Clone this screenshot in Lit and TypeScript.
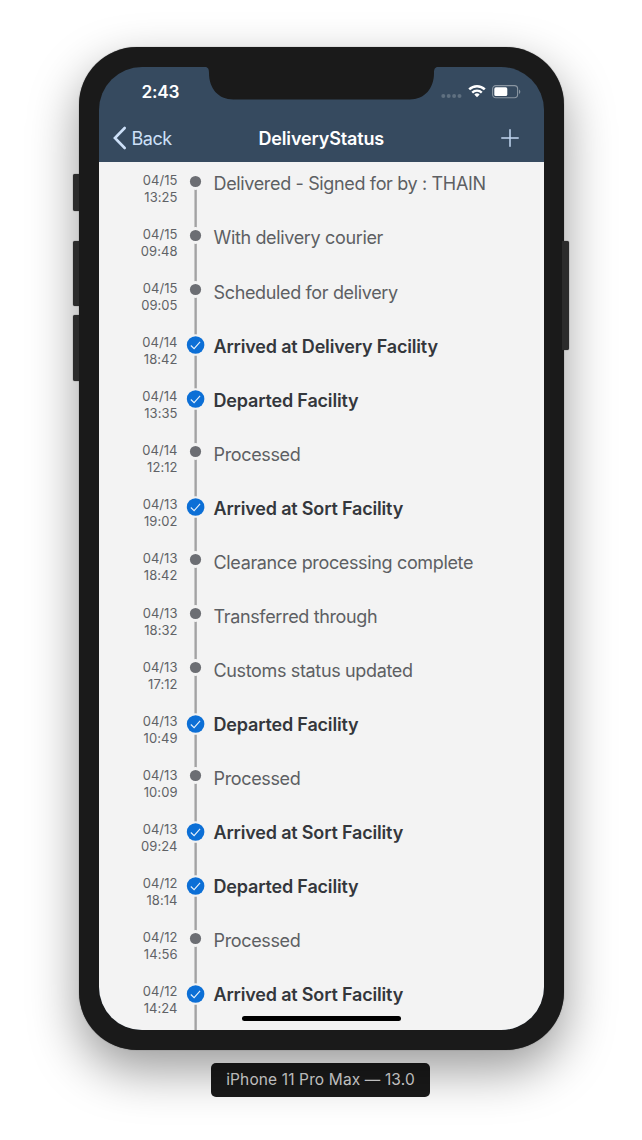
import { LitElement, html, css } from "lit";
import { customElement } from "lit/decorators.js";
import { classMap } from "lit/directives/class-map.js";

interface TrackingEvent {
  date: string;
  time: string;
  label: string;
  major?: boolean;
}

const EVENTS: TrackingEvent[] = [
  { date: "04/15", time: "13:25", label: "Delivered - Signed for by : THAIN" },
  { date: "04/15", time: "09:48", label: "With delivery courier" },
  { date: "04/15", time: "09:05", label: "Scheduled for delivery" },
  { date: "04/14", time: "18:42", label: "Arrived at Delivery Facility", major: true },
  { date: "04/14", time: "13:35", label: "Departed Facility", major: true },
  { date: "04/14", time: "12:12", label: "Processed" },
  { date: "04/13", time: "19:02", label: "Arrived at Sort Facility", major: true },
  { date: "04/13", time: "18:42", label: "Clearance processing complete" },
  { date: "04/13", time: "18:32", label: "Transferred through" },
  { date: "04/13", time: "17:12", label: "Customs status updated" },
  { date: "04/13", time: "10:49", label: "Departed Facility", major: true },
  { date: "04/13", time: "10:09", label: "Processed" },
  { date: "04/13", time: "09:24", label: "Arrived at Sort Facility", major: true },
  { date: "04/12", time: "18:14", label: "Departed Facility", major: true },
  { date: "04/12", time: "14:56", label: "Processed" },
  { date: "04/12", time: "14:24", label: "Arrived at Sort Facility", major: true },
];

@customElement("delivery-timeline")
class DeliveryTimeline extends LitElement {
  static styles = css`
    :host { display: block; position: relative; flex: 1; min-height: 0; overflow: hidden; background: #f3f3f3; }
    .line {
      position: absolute; left: 95.5px; top: 19px; bottom: 0; width: 3px;
      background: linear-gradient(90deg, #c6c6c6 1px, #a2a2a3 1px, #a2a2a3 2px, #b0b0b1 2px);
    }
    .row { position: relative; display: grid; grid-template-columns: 79px 36px 1fr; height: 54.07px; }
    .when { padding-top: 10px; text-align: right; font-size: 13px; line-height: 17px; letter-spacing: 0.05px; color: #606266; }
    .marker { display: flex; justify-content: center; align-items: flex-start; padding-top: 10.8px; }
    .marker.major { padding-top: 10px; }
    .marker svg { display: block; }
    .label { padding-top: 10.4px; font-size: 18px; line-height: 24px; letter-spacing: -0.35px; color: #5d5f63; white-space: nowrap; }
    .label.major { font-weight: 600; color: #34373c; letter-spacing: -0.18px; }
  `;

  render() {
    return html`
      <div class="line"></div>
      ${EVENTS.map((e) => {
        const major = !!e.major;
        return html`<div class="row">
          <div class="when">${e.date}<br />${e.time}</div>
          <div class=${classMap({ marker: true, major })}>
            ${major
              ? html`<svg width="23" height="22" viewBox="0 0 23 22">
                  <circle cx="11.6" cy="11" r="10.8" fill="#f3f3f3" />
                  <circle cx="11.6" cy="11" r="8.8" fill="#0c6fd6" />
                  <path d="M6.8 11.5 10.1 14.700 16.1 7.800" fill="none" stroke="#e8f2fc" stroke-width="1.1" />
                </svg>`
              : html`<svg width="17" height="17" viewBox="0 0 17 17">
                  <circle cx="8.5" cy="8.5" r="8.5" fill="#f3f3f3" />
                  <circle cx="8.5" cy="8.5" r="5.6" fill="#6c6e73" />
                </svg>`}
          </div>
          <div class=${classMap({ label: true, major })}>${e.label}</div>
        </div>`;
      })}
    `;
  }
}

@customElement("app-root")
class AppRoot extends LitElement {
  static styles = css`
    :host {
      display: flex; flex-direction: column; align-items: center; box-sizing: border-box;
      width: 642px; height: 1140px; padding-top: 46.5px; overflow: hidden; background: #fff;
      font-family: Inter, "Liberation Sans", sans-serif;
    }
    .phone {
      position: relative; box-sizing: border-box; width: 485px; height: 1003.5px; padding: 20.5px 20px 20.5px;
      background: #1a1a1a; border-radius: 58px;
      box-shadow: 0 0 1px rgba(0, 0, 0, 0.6), 0 20px 50px rgba(0, 0, 0, 0.4);
    }
    .key { position: absolute; width: 6px; background: #2b2b2b; border-radius: 2px 0 0 2px; left: -6px; box-shadow: 0 0 1px #222; }
    .mute { top: 127px; height: 37px; }
    .up { top: 194.5px; height: 65px; }
    .down { top: 268.5px; height: 65.5px; }
    .power { left: auto; right: -5.4px; top: 194.5px; height: 108.5px; border-radius: 0 2px 2px 0; width: 7px; }
    .screen { position: relative; display: flex; flex-direction: column; height: 100%; overflow: hidden; border-radius: 43px; background: #364a5f; }
    .notch { position: absolute; left: 106px; top: 0; display: block; }
    .status { display: flex; align-items: flex-start; height: 48px; padding: 0 23px 0 43px; color: #fff; }
    .clock { flex: 1; padding-top: 13.5px; font-size: 17.3px; line-height: 22px; font-weight: 600; letter-spacing: -0.25px; }
    .status svg { display: block; }
    .cell { margin: 26.5px 6px 0 0; }
    .wifi { margin: 16.5px 6px 0 0; }
    .battery { margin-top: 17.5px; }
    .nav { display: grid; grid-template-columns: 1fr auto 1fr; align-items: center; height: 47px; padding: 0 24.5px 0 14px; }
    .back { display: flex; align-items: center; gap: 5px; font-size: 18px; color: #cde0f8; letter-spacing: -0.5px; }
    .title { font-size: 18px; font-weight: 600; color: #fff; letter-spacing: -0.15px; padding-left: 11px; }
    .back svg, .back span, .title { margin-top: -1px; }
    .add { justify-self: end; display: block; margin-top: -1px; }
    .home { position: absolute; left: 143px; bottom: 8.5px; width: 159px; height: 5.5px; border-radius: 3px; background: #000; }
    .caption {
      margin: 13px 1px 0 0; width: 219px; height: 34px; border-radius: 5px; background: #1a1a1a;
      color: #dcdcdc; font-size: 15.5px; letter-spacing: 0.13px; line-height: 34px; text-align: center; white-space: nowrap;
    }
  `;

  render() {
    return html`
      <div class="phone">
        <div class="key mute"></div>
        <div class="key up"></div>
        <div class="key down"></div>
        <div class="key power"></div>
        <div class="screen">
          <div class="status">
            <span class="clock">2:43</span>
            <svg class="cell" width="21" height="5" viewBox="0 0 21 5" fill="#5f7080">
              <circle cx="2.3" cy="2" r="2" /><circle cx="7.7" cy="2" r="2" />
              <circle cx="13.1" cy="2" r="2" /><circle cx="18.5" cy="2" r="2" />
            </svg>
            <svg class="wifi" width="18" height="14" viewBox="0 0 18 14" fill="none" stroke="#fff">
              <path d="M1.2 5.4a11.2 11.2 0 0 1 15.6 0" stroke-width="2.5" />
              <path d="M4.2 8.6a6.9 6.9 0 0 1 9.6 0" stroke-width="2.4" />
              <path d="M9 13.3 6.3 10.6a4 4 0 0 1 5.4 0Z" fill="#fff" stroke="none" />
            </svg>
            <svg class="battery" width="29" height="14" viewBox="0 0 29 14">
              <rect x="0.6" y="0.6" width="25" height="12.2" rx="3.2" fill="none" stroke="#8995a1" stroke-width="1.1" />
              <path d="M27 4.5v4.5c1.8-.8 1.8-3.7 0-4.5Z" fill="#8995a1" />
              <rect x="2.3" y="2.3" width="13" height="8.8" rx="1.6" fill="#fff" />
            </svg>
          </div>
          <div class="nav">
            <div class="back">
              <svg width="14" height="24" viewBox="0 0 14 24" fill="none" stroke="#cde0f8" stroke-width="2.6" stroke-linecap="round">
                <path d="M11.7 2 1.9 12 11.7 22" />
              </svg>
              <span>Back</span>
            </div>
            <div class="title">DeliveryStatus</div>
            <svg class="add" width="18" height="18" viewBox="0 0 18 18" stroke="#c3d8f2" stroke-width="1.5" stroke-linecap="round">
              <path d="M9 .8v16.4M.8 9h16.4" />
            </svg>
          </div>
          <delivery-timeline></delivery-timeline>
          <svg class="notch" width="233" height="34" viewBox="0 0 233 34">
            <path d="M0 0C3.2 0 4 2.2 4 6c0 15 9 26.5 24.5 26.5h176C220 32.500 229 21 229 6c0-3.800.8-6 4-6Z" fill="#1a1a1a" />
          </svg>
          <div class="home"></div>
        </div>
      </div>
      <div class="caption">iPhone 11 Pro Max — 13.0</div>
    `;
  }
}
